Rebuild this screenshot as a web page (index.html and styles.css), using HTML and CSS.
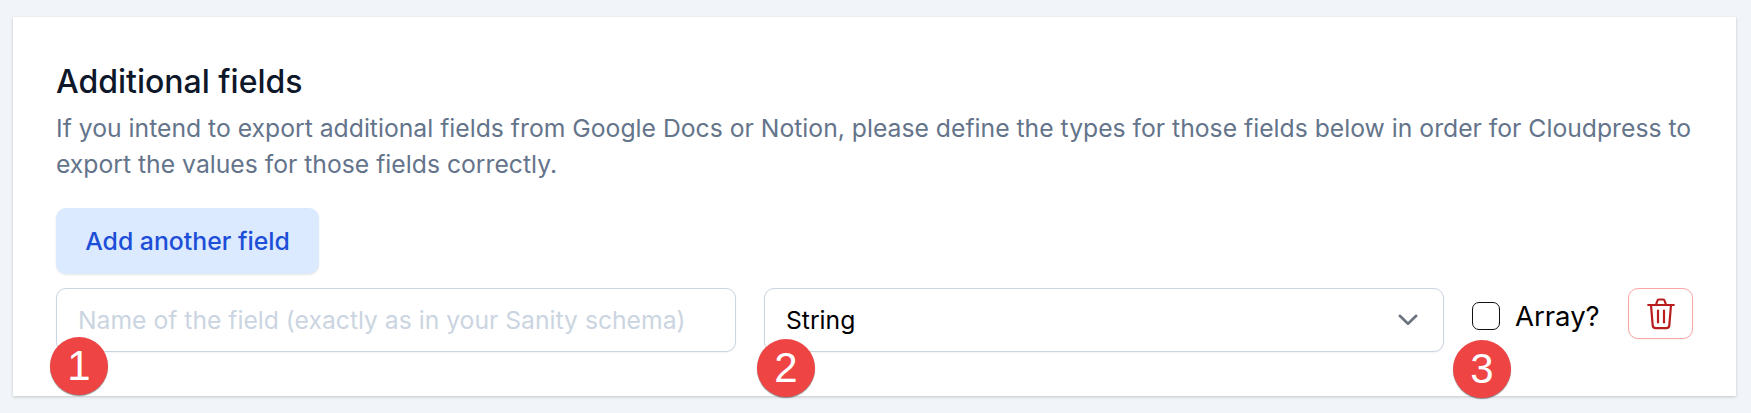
FILE: index.html
```html
<!DOCTYPE html>
<html lang="en">
<head>
  <meta charset="UTF-8" />
  <title>Additional fields</title>
  <link rel="stylesheet" href="styles.css">
</head>
<body>
  <section class="card">
    <h2>Additional fields</h2>
    <p class="help">If you intend to export additional fields from Google Docs or Notion, please define the types for those fields below in order for Cloudpress to export the values for those fields correctly.</p>
    <button type="button" class="add-btn">Add another field</button>

    <div class="field-row">
      <input type="text" class="control name-input" placeholder="Name of the field (exactly as in your Sanity schema)" />
      <div class="control select-box">
        <span>String</span>
        <svg class="chevron" width="20" height="20" viewBox="0 0 20 20" fill="none" stroke="#6b7280" stroke-width="2.6" stroke-linecap="round" stroke-linejoin="round"><path d="M1.800 5.800 10 13.800l8.200-8"/></svg>
      </div>
      <label class="array-label"><span class="checkbox"></span>Array?</label>
      <button type="button" class="delete-btn" aria-label="Delete">
        <svg width="28" height="32" viewBox="0 0 28 32" fill="none" stroke="#b91c1c" stroke-width="2.2" stroke-linecap="round" stroke-linejoin="round"><path d="M1.200 7h25.600M4 7l1.700 20.400a3 3 0 0 0 3 2.800h10.600a3 3 0 0 0 3-2.800L24 7M9 7l1.200-4a2 2 0 0 1 2-1.500h3.600a2 2 0 0 1 2 1.500L19 7M11 12.500v12M17 12.500v12"/></svg>
      </button>
    </div>
  </section>

  <span class="badge badge-1">1</span>
  <span class="badge badge-2">2</span>
  <span class="badge badge-3">3</span>
</body>
</html>
```

FILE: styles.css
```css
* {
  box-sizing: border-box;
}

body {
  margin: 0;
  height: 413px;
  padding: 17px 15px 0 13px;
  background: #f1f5f9;
  font-family: Inter, sans-serif;
  overflow: hidden;
}

.card {
  height: 379px;
  padding: 45px 43px 0;
  background: #fff;
  box-shadow: 0 1px 3px rgba(0, 0, 0, 0.2);
}

h2 {
  margin: 0;
  font-size: 32px;
  line-height: 39px;
  font-weight: 500;
  color: #0f172a;
}

.help {
  margin: 9px 0 0;
  font-size: 24.720px;
  line-height: 36px;
  color: #64748b;
}

.add-btn {
  display: block;
  width: 263px;
  height: 66px;
  margin-top: 26px;
  border: 0;
  border-radius: 10px;
  background: #dbeafe;
  color: #1d4ed8;
  font: 500 24.800px Inter, sans-serif;
  box-shadow: 0 1px 2px rgba(0, 0, 0, 0.1);
}

.field-row {
  display: flex;
  align-items: flex-start;
  margin-top: 14px;
}

.control {
  width: 680px;
  height: 64px;
  border: 1px solid #cbd5e1;
  border-radius: 10px;
  background: #fff;
  box-shadow: 0 1px 2px rgba(0, 0, 0, 0.05);
  font: 400 24.700px Inter, sans-serif;
  color: #000;
}

.name-input {
  padding: 0 21px;
}

.name-input::placeholder {
  color: #cbd5e1;
  opacity: 1;
}

.select-box {
  display: flex;
  align-items: center;
  justify-content: space-between;
  margin-left: 28px;
  padding: 0 25px 0 21px;
}

.array-label {
  display: flex;
  align-items: center;
  height: 56px;
  margin-left: 28px;
  font-size: 27.500px;
  color: #000;
}

.checkbox {
  width: 28px;
  height: 28px;
  margin-right: 15px;
  border: 1.500px solid #111;
  border-radius: 7px;
  background: #fff;
}

.delete-btn {
  display: flex;
  align-items: center;
  justify-content: center;
  width: 65px;
  height: 51px;
  margin-left: auto;
  padding: 0;
  border: 1px solid #fca5a5;
  border-radius: 10px;
  background: #fff;
  box-shadow: 0 1px 2px rgba(0, 0, 0, 0.05);
}

.badge {
  position: absolute;
  display: flex;
  align-items: center;
  justify-content: center;
  width: 58px;
  height: 58px;
  border-radius: 50%;
  background: #ef4444;
  color: #fff;
  font-family: "Liberation Sans", sans-serif;
  font-size: 42px;
  box-shadow: 0 1px 1px rgba(0, 0, 0, 0.45);
}

.badge-1 {
  left: 50px;
  top: 337px;
}

.badge-2 {
  left: 757px;
  top: 339px;
}

.badge-3 {
  left: 1453px;
  top: 340px;
}
```
